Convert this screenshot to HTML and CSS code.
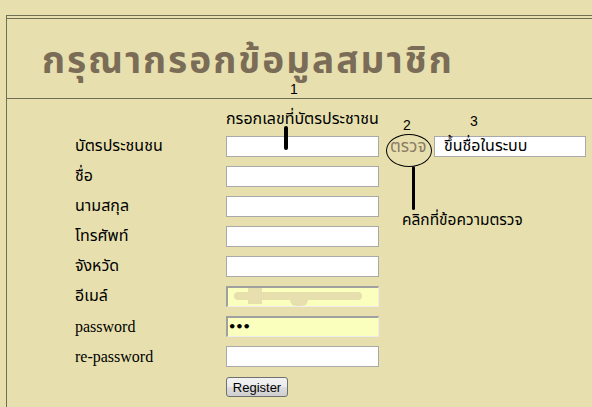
FILE: index.html
```html
<!DOCTYPE html>
<html lang="th">
<head>
<meta charset="utf-8">
<title>กรุณากรอกข้อมูลสมาชิก</title>
<link rel="stylesheet" href="styles.css">
</head>
<body>
<div class="frame">
  <div class="panel">
    <header class="head">
      <h1 class="title">กรุณากรอกข้อมูลสมาชิก</h1>
      <span class="num num1">1</span>
    </header>
    <div class="body">
      <div class="hint">กรอกเลขที่บัตรประชาชน</div>
      <form class="form">
        <label class="lbl th">บัตรประชนชน</label>
        <div class="field first">
          <input class="inp" type="text">
          <a class="check">ตรวจ</a>
          <div class="status">ขึ้นชื่อในระบบ</div>
        </div>
        <label class="lbl th">ชื่อ</label>
        <div class="field"><input class="inp" type="text"></div>
        <label class="lbl th">นามสกุล</label>
        <div class="field"><input class="inp" type="text"></div>
        <label class="lbl th">โทรศัพท์</label>
        <div class="field"><input class="inp" type="text"></div>
        <label class="lbl th">จังหวัด</label>
        <div class="field"><input class="inp" type="text"></div>
        <label class="lbl th">อีเมล์</label>
        <div class="field"><div class="inp auto email"><span class="smudge"></span></div></div>
        <label class="lbl">password</label>
        <div class="field"><div class="inp auto pw">•••</div></div>
        <label class="lbl">re-password</label>
        <div class="field"><input class="inp" type="password"></div>
        <span></span>
        <div class="field"><button class="btn" type="button">Register</button></div>
      </form>
      <span class="num num2">2</span>
      <span class="num num3">3</span>
      <span class="mark mark1"></span>
      <span class="mark mark2"></span>
      <span class="ring"></span>
      <span class="note">คลิกที่ข้อความตรวจ</span>
    </div>
  </div>
</div>
</body>
</html>
```

FILE: styles.css
```css
html, body {
  margin: 0;
  background: #e7e0ae;
}
body {
  height: 407px;
  overflow: hidden;
  font-family: Tahoma, "Noto Sans Thai", "Loma", "Garuda", "DejaVu Sans", sans-serif;
}
.frame {
  margin: 15px 0 0 6px;
  border-top: 1px solid #6e6f55;
  border-left: 1px solid #6e6f55;
  padding-top: 2px;
  height: 400px;
}
.panel {
  border-top: 1px solid #6e6f55;
}
.head {
  position: relative;
  height: 79px;
  border-bottom: 1px solid #6e6f55;
}
.title {
  margin: 0;
  padding: 28px 0 0 35px;
  font-size: 37px;
  font-weight: bold;
  color: #7a6c57;
  line-height: 30px;
  letter-spacing: 2px;
  white-space: nowrap;
}
.num {
  position: absolute;
  font-family: "Liberation Sans", Arial, sans-serif;
  font-size: 14px;
  color: #000;
}
.num1 { left: 283px; bottom: 1px; line-height: 15px; }
.body {
  position: relative;
  padding-top: 11px;
}
.hint {
  margin-left: 219px;
  font-size: 16px;
  line-height: 18px;
  height: 26px;
  white-space: nowrap;
}
.form {
  display: grid;
  grid-template-columns: 151px 1fr;
  grid-auto-rows: 30px;
  margin-left: 68px;
}
.lbl {
  font-family: "Liberation Serif", "Noto Serif Thai", serif;
  font-size: 16px;
  line-height: 21px;
  color: #000;
}
.lbl.th {
  font-family: Tahoma, "Noto Sans Thai", "Loma", "Garuda", sans-serif;
}
.field {
  display: flex;
  align-items: flex-start;
}
.inp {
  box-sizing: border-box;
  width: 153px;
  height: 21px;
  margin: 0;
  border: 1px solid #a9a9a9;
  background: #fff;
  padding: 0 2px;
  font-size: 13px;
}
.auto {
  background: #faffbd;
  border-style: solid;
  border-width: 2px 1px 1px 2px;
  border-color: #a0a0a0 #ececec #ececec #a0a0a0;
  position: relative;
  overflow: hidden;
}
.pw {
  font-family: "DejaVu Sans", sans-serif;
  font-size: 13px;
  font-weight: bold;
  line-height: 17px;
  letter-spacing: -1px;
  color: #000;
  padding-left: 0;
}
.smudge {
  position: absolute;
  left: 6px;
  top: 4px;
  width: 128px;
  height: 8px;
  background: #e7e0ae;
  border-radius: 4px;
}
.smudge::before {
  content: "";
  position: absolute;
  left: 14px;
  top: -4px;
  width: 14px;
  height: 16px;
  background: #e7e0ae;
}
.smudge::after {
  content: "";
  position: absolute;
  left: 56px;
  top: 4px;
  width: 18px;
  height: 10px;
  background: #e7e0ae;
  border-radius: 0 0 6px 6px;
}
.check {
  flex: none;
  width: 38px;
  margin: 3px 0 0 11px;
  font-size: 17px;
  line-height: 17px;
  color: #8a7b66;
  white-space: nowrap;
  cursor: pointer;
}
.status {
  box-sizing: border-box;
  width: 152px;
  height: 21px;
  margin-left: 6px;
  background: #fff;
  border: 1px solid #a9a9a9;
  padding-left: 9px;
  font-size: 16px;
  line-height: 19px;
  white-space: nowrap;
}
.btn {
  width: 62px;
  height: 20px;
  margin: 1px 0 0 0;
  padding: 0;
  font-family: "Liberation Sans", Arial, sans-serif;
  font-size: 13px;
  border: 1px solid #707070;
  border-radius: 3px;
  background: linear-gradient(#f2f2f2, #ebebeb 50%, #dddddd 51%, #cfcfcf);
  color: #000;
}
.num2 { left: 396px; top: 18px; line-height: 16px; }
.num3 { left: 463px; top: 14px; line-height: 16px; }
.mark {
  position: absolute;
  width: 4px;
  background: #000;
  border-radius: 2px;
}
.mark1 { left: 277px; top: 27px; height: 24px; }
.mark2 { left: 405px; top: 67px; height: 44px; width: 3px; }
.ring {
  position: absolute;
  left: 379px;
  top: 35px;
  width: 44px;
  height: 31px;
  border: 1px solid #000;
  border-radius: 50%;
}
.note {
  position: absolute;
  left: 395px;
  top: 113px;
  font-size: 15.5px;
  line-height: 18px;
  white-space: nowrap;
}
```
